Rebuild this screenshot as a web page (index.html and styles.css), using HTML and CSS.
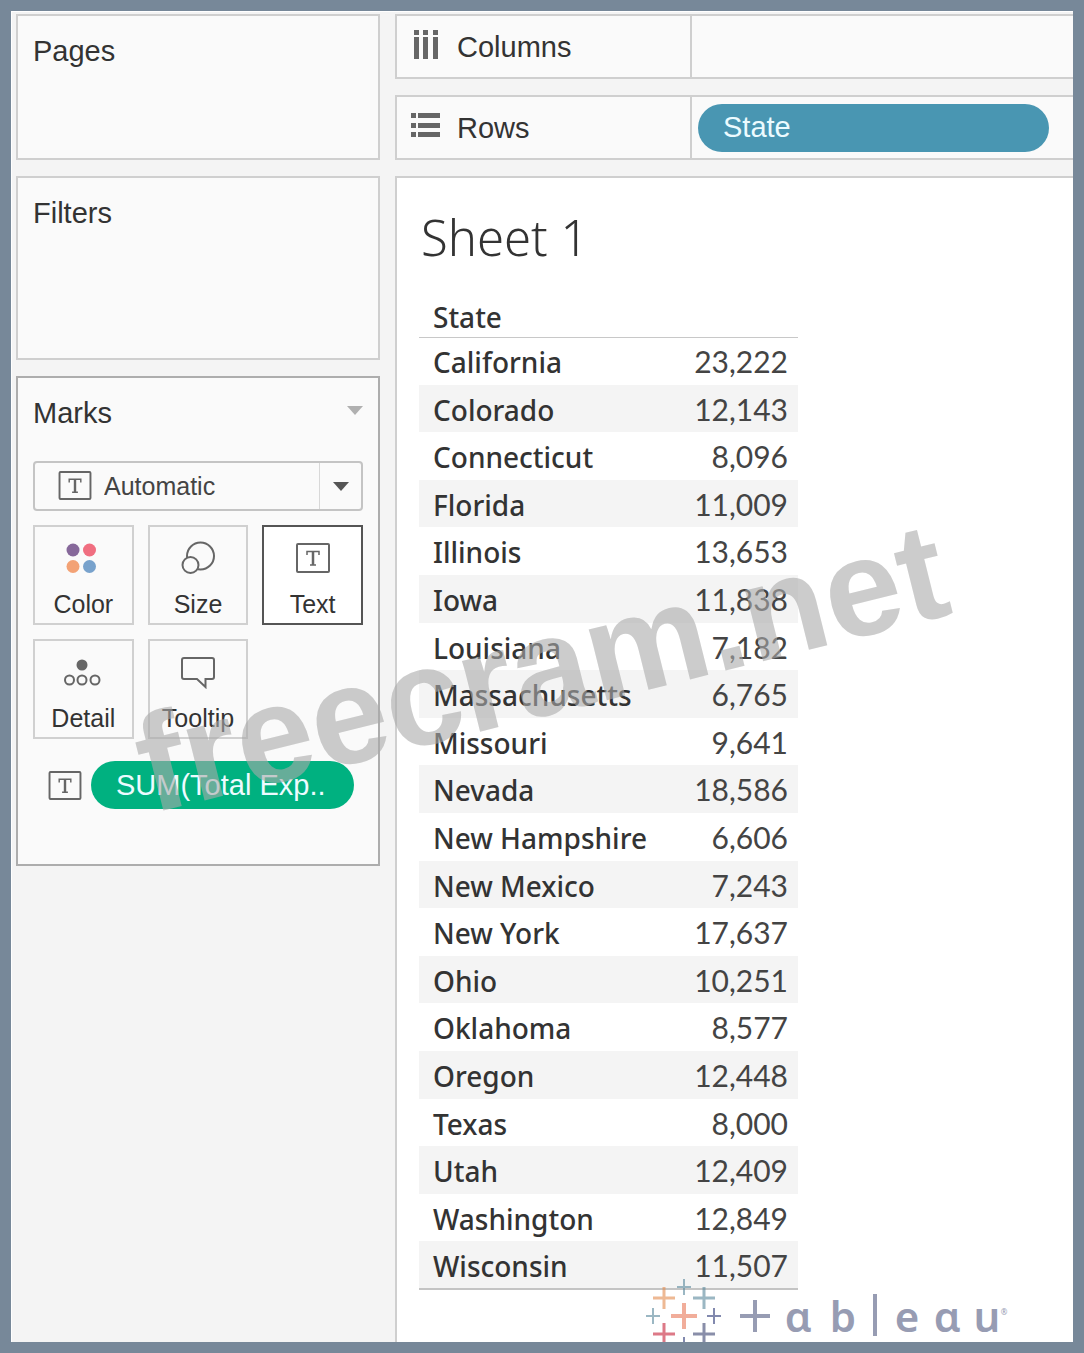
FILE: index.html
```
<!DOCTYPE html>
<html lang="en">
<head>
    <meta charset="utf-8">
    <title>Sheet 1</title>
    <link rel="stylesheet" href="styles.css">
</head>
<body>
    <svg class="defs" width="0" height="0" aria-hidden="true">
        <symbol id="text-mark" viewBox="0 0 34 30">
            <rect x="1" y="1" width="32" height="28" rx="1" fill="none" stroke="#666" stroke-width="2"/>
            <path d="M11 12V8.500H23V12M14 22H20" fill="none" stroke="#666" stroke-width="1.500"/>
            <path d="M17 8.500V22" fill="none" stroke="#666" stroke-width="2.500"/>
        </symbol>
    </svg>
    <div class="workspace">
        <aside class="side">
            <section class="card pages"><h2>Pages</h2></section>
            <section class="card filters"><h2>Filters</h2></section>
            <section class="card marks">
                <div class="marks-head">
                    <h2>Marks</h2>
                    <button class="caret" type="button" aria-label="Marks menu">
                        <svg width="16" height="9" viewBox="0 0 16 9"><path d="M0 0H16L8 9Z" fill="#b0b0b0"/></svg>
                    </button>
                </div>
                <div class="mark-type">
                    <svg class="type-icon" width="34" height="29"><use href="#text-mark"/></svg>
                    <select aria-label="Mark type">
                        <option>Automatic</option>
                    </select>
                    <span class="arrow"><svg width="16" height="9" viewBox="0 0 16 9"><path d="M0 0H16L8 9Z" fill="#555"/></svg></span>
                </div>
                <div class="mark-grid">
                    <button type="button">
                        <svg width="34" height="34" viewBox="0 0 34 34">
                            <circle cx="7" cy="9" r="6.500" fill="#86689a"/>
                            <circle cx="23.500" cy="9" r="6.500" fill="#f06e80"/>
                            <circle cx="7" cy="25.500" r="6.500" fill="#f3a275"/>
                            <circle cx="23.500" cy="25.500" r="6.500" fill="#78a2cc"/>
                        </svg>
                        Color
                    </button>
                    <button type="button">
                        <svg width="34" height="34" viewBox="0 0 34 34" fill="#fafafa" stroke="#666" stroke-width="2">
                            <circle cx="19.500" cy="15" r="13.500"/>
                            <circle cx="9.500" cy="24" r="8"/>
                        </svg>
                        Size
                    </button>
                    <button class="active" type="button">
                        <svg width="34" height="34"><use href="#text-mark"/></svg>
                        Text
                    </button>
                    <button type="button">
                        <svg width="38" height="34" viewBox="0 0 38 34" fill="none" stroke="#666" stroke-width="2">
                            <circle cx="18" cy="10" r="5.500" fill="#666" stroke="none"/>
                            <circle cx="5.500" cy="25" r="4.500"/>
                            <circle cx="18" cy="25" r="4.500"/>
                            <circle cx="31" cy="25" r="4.500"/>
                        </svg>
                        Detail
                    </button>
                    <button type="button">
                        <svg width="34" height="34" viewBox="0 0 34 34">
                            <path d="M3 3H31Q33 3 33 5V22Q33 24 31 24H24.500V32L16 24H3Q1 24 1 22V5Q1 3 3 3Z" fill="none" stroke="#666" stroke-width="2"/>
                        </svg>
                        Tooltip
                    </button>
                </div>
                <div class="mark-field">
                    <svg width="34" height="29"><use href="#text-mark"/></svg>
                    <button class="pill measure" type="button">SUM(Total Exp..</button>
                </div>
            </section>
        </aside>
        <main class="main">
            <div class="card shelf">
                <div class="shelf-label">
                    <svg width="30" height="34" viewBox="0 0 30 34" fill="#666">
                        <path d="M3 0h5v5h-5zM12 0h5v5h-5zM22 0h5v5h-5zM3 7h5v22h-5zM12 7h5v22h-5zM22 7h5v22h-5z"/>
                    </svg>
                    Columns
                </div>
                <div class="shelf-drop"></div>
            </div>
            <div class="card shelf">
                <div class="shelf-label">
                    <svg width="30" height="34" viewBox="0 0 30 34" fill="#666">
                        <path d="M0 2h5v5h-5zM0 12h5v5h-5zM0 21h5v5h-5zM7 2h22v5h-22zM7 12h22v5h-22zM7 21h22v5h-22z"/>
                    </svg>
                    Rows
                </div>
                <div class="shelf-drop"><button class="pill dimension" type="button">State</button></div>
            </div>
            <section class="card sheet">
                <h1>Sheet 1</h1>
                <table>
                    <thead>
                        <tr><th colspan="2" scope="col">State</th></tr>
                    </thead>
                    <tbody>
                        <tr><th scope="row">California</th><td>23,222</td></tr>
                        <tr><th scope="row">Colorado</th><td>12,143</td></tr>
                        <tr><th scope="row">Connecticut</th><td>8,096</td></tr>
                        <tr><th scope="row">Florida</th><td>11,009</td></tr>
                        <tr><th scope="row">Illinois</th><td>13,653</td></tr>
                        <tr><th scope="row">Iowa</th><td>11,838</td></tr>
                        <tr><th scope="row">Louisiana</th><td>7,182</td></tr>
                        <tr><th scope="row">Massachusetts</th><td>6,765</td></tr>
                        <tr><th scope="row">Missouri</th><td>9,641</td></tr>
                        <tr><th scope="row">Nevada</th><td>18,586</td></tr>
                        <tr><th scope="row">New Hampshire</th><td>6,606</td></tr>
                        <tr><th scope="row">New Mexico</th><td>7,243</td></tr>
                        <tr><th scope="row">New York</th><td>17,637</td></tr>
                        <tr><th scope="row">Ohio</th><td>10,251</td></tr>
                        <tr><th scope="row">Oklahoma</th><td>8,577</td></tr>
                        <tr><th scope="row">Oregon</th><td>12,448</td></tr>
                        <tr><th scope="row">Texas</th><td>8,000</td></tr>
                        <tr><th scope="row">Utah</th><td>12,409</td></tr>
                        <tr><th scope="row">Washington</th><td>12,849</td></tr>
                        <tr><th scope="row">Wisconsin</th><td>11,507</td></tr>
                    </tbody>
                </table>
            </section>
        </main>
    </div>

    <!-- overlays -->
    <div class="watermark">freecram.net</div>
    <svg class="logo" width="366" height="75" viewBox="0 0 366 75" role="img" aria-label="tableau">
        <g fill="none">
            <path d="M38 25V51M25 38H51" stroke="#e8765699" stroke-width="4"/>
            <path d="M18 9V31M7 20H29" stroke="#e38a4d99" stroke-width="3"/>
            <path d="M58 9V31M47 20H69" stroke="#59879b99" stroke-width="3"/>
            <path d="M18 45V67M7 56H29" stroke="#c7203799" stroke-width="3"/>
            <path d="M58 45V67M47 56H69" stroke="#3b427099" stroke-width="3"/>
            <path d="M38 1V17M31 9H45M7 30V46M0 38H14" stroke="#59879b99" stroke-width="2"/>
            <path d="M68 30V46M61 38H75M38 59V75M31 67H45" stroke="#2f3a7899" stroke-width="2"/>
            <path d="M109 22V54M94 38H124M229 16V58" stroke="#979cb3" stroke-width="4"/>
        </g>
        <g class="logo-text">
            <text x="152" y="54">ɑ</text>
            <text x="197" y="54">b</text>
            <text x="261" y="54">e</text>
            <text x="301" y="54">ɑ</text>
            <text x="341" y="54">u</text>
            <text class="reg" x="358" y="37">®</text>
        </g>
    </svg>
</body>
</html>
```
FILE: styles.css
```
* {
    box-sizing: border-box;
}

body {
    position: relative;
    margin: 0;
    min-height: 100vh;
    display: flex;
    border: 11px solid #778899;
    background: #f4f4f4;
    color: #333;
    font-family: "Liberation Sans", Arial, sans-serif;
    font-size: 29px;
}

.defs {
    position: absolute;
}

h1, h2 {
    margin: 0;
    font-weight: 400;
}

h2 {
    font-size: 29px;
    line-height: 36px;
}

button {
    padding: 0;
    border: 0;
    background: none;
    color: inherit;
    font: inherit;
    cursor: pointer;
}

.workspace {
    flex: 1;
    min-width: 0;
    display: flex;
    gap: 15px;
    padding: 3px 0 0 5px;
    box-shadow: inset 0 1px #fff, inset 1px 0 #fff;
}

.side {
    flex: 0 0 364px;
    display: flex;
    flex-direction: column;
    gap: 16px;
}

.card {
    border: 2px solid #cfcfcf;
    background: #fafafa;
}

.side .card {
    padding: 17px 15px;
}

.pages {
    min-height: 146px;
}

.filters {
    min-height: 184px;
}

.side .marks {
    padding-bottom: 55px;
    border-color: #adadad;
}

.marks-head {
    display: flex;
    justify-content: space-between;
    margin-bottom: 30px;
}

.caret {
    display: flex;
    padding-top: 11px;
}

.mark-type {
    position: relative;
    height: 50px;
    margin-bottom: 14px;
}

.mark-type select {
    appearance: none;
    width: 100%;
    height: 100%;
    padding: 0 44px 0 69px;
    border: 2px solid #c4c4c4;
    border-radius: 4px;
    background: #fafafa;
    color: #444;
    font: inherit;
    font-size: 25px;
}

.type-icon {
    position: absolute;
    top: 10px;
    left: 25px;
    pointer-events: none;
}

.arrow {
    position: absolute;
    top: 2px;
    right: 2px;
    bottom: 2px;
    width: 42px;
    display: flex;
    align-items: center;
    justify-content: center;
    border-left: 1px solid #d8d8d8;
    pointer-events: none;
}

.mark-grid {
    display: grid;
    grid-template-columns: repeat(3, 1fr);
    gap: 14px;
}

.mark-grid button {
    height: 100px;
    display: flex;
    flex-direction: column;
    align-items: center;
    justify-content: space-between;
    padding: 14px 0 3px;
    border: 2px solid #d0d0d0;
    font-size: 25px;
    line-height: 32px;
}

.mark-grid .active {
    border-color: #555;
    background: #fff;
}

.mark-field {
    display: flex;
    align-items: center;
    gap: 9px;
    margin-top: 22px;
    padding: 0 9px 0 15px;
}

.pill {
    height: 48px;
    padding: 0 25px;
    border-radius: 24px;
    color: #ecfbff;
    text-align: left;
    white-space: nowrap;
}

.measure {
    flex: 1;
    background: #00b180;
}

.dimension {
    width: 100%;
    max-width: 351px;
    background: #4996b2;
}

.main {
    flex: 1;
    min-width: 0;
    display: flex;
    flex-direction: column;
    gap: 16px;
}

.main .card {
    border-right: 0;
}

.shelf {
    display: flex;
    height: 65px;
}

.shelf-label {
    flex: 0 0 295px;
    display: flex;
    align-items: center;
    gap: 16px;
    padding-top: 1px;
    padding-left: 14px;
    border-right: 2px solid #cfcfcf;
}

.shelf-drop {
    flex: 1;
    display: flex;
    align-items: center;
    padding: 0 24px 0 6px;
}

.main .sheet {
    flex: 1;
    padding: 30px 22px 48px;
    border-bottom: 0;
    background: #fff;
}

h1 {
    padding-left: 2px;
    font-family: "Noto Sans", sans-serif;
    font-weight: 300;
    font-size: 49px;
    line-height: 58px;
}

table {
    width: 379px;
    margin-top: 30px;
    border-collapse: collapse;
    border-bottom: 2px solid #c4c4c4;
}

th, td {
    height: 48px;
    padding: 0;
    line-height: 36px;
}

tbody tr:nth-child(5n+2) > *,
tbody tr:nth-child(5n+4) > * {
    height: 47px;
}

tbody tr:nth-child(even) {
    background: #f4f4f4;
}

th {
    padding-top: 2px;
    padding-left: 14px;
    font-family: "Noto Sans", "Open Sans", sans-serif;
    font-weight: 500;
    font-size: 28px;
    text-align: left;
}

thead th {
    height: 41px;
    border-bottom: 1px solid #c8c8c8;
}

td {
    padding-right: 10px;
    color: #444;
    font-family: Lato, sans-serif;
    font-size: 30px;
    text-align: right;
}

.watermark {
    position: absolute;
    left: 530px;
    top: 656px;
    transform: translate(-50%, -50%) rotate(-14deg);
    color: rgba(170, 170, 170, 0.6);
    font-size: 138px;
    font-weight: 700;
    line-height: 1;
    pointer-events: none;
}

.logo {
    position: absolute;
    left: 635px;
    bottom: -11px;
}

.logo-text {
    fill: #979cb3;
    font-family: "Noto Sans", sans-serif;
    font-size: 42px;
    font-weight: 600;
    text-anchor: middle;
}

.logo-text .reg {
    font-size: 8px;
    font-weight: 400;
}
```
